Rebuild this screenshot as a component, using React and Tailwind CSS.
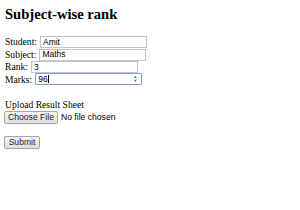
import { useState } from 'react';

const serif = { fontFamily: '"Liberation Serif", "Times New Roman", serif' };

const Field = ({ label, value, focused, number }) => (
  <div className="flex items-center h-[12.4px] text-[9.6px] leading-none text-black">
    <span>{label}</span>
    <div
      className={`ml-[3px] flex items-center h-[12px] w-[107px] bg-white px-[2px] font-['Liberation_Sans',Arial,sans-serif] text-[8.5px] ${
        focused ? 'border border-[#7b9fd6] rounded-[1px]' : 'border border-[#c4c4c4]'
      }`}
    >
      <span className="flex-1 flex items-center">
        {value}
        {focused && <span className="inline-block w-[1px] h-[8px] bg-black" />}
      </span>
      {number && (
        <span className="flex flex-col items-center text-[4px] leading-[4px] text-[#555] mr-[2px]">
          <span>▲</span>
          <span>▼</span>
        </span>
      )}
    </div>
  </div>
);

const GrayButton = ({ children, className = '' }) => (
  <button
    className={`flex items-center justify-center whitespace-nowrap h-[13px] px-0 rounded-[2px] border border-[#a6a6a6] bg-gradient-to-b from-[#f6f6f6] to-[#dedede] text-[8.6px] leading-none text-[#222] font-['Liberation_Sans',Arial,sans-serif] ${className}`}
  >
    {children}
  </button>
);

export default function App() {
  const [file] = useState(null);

  return (
    <div className="w-[300px] h-[210px] bg-white px-[5px] overflow-hidden" style={serif}>
      <h2 className="pt-[5px] text-[14.6px] font-bold leading-[18px] text-black">Subject-wise rank</h2>

      <form className="mt-[13px]">
        <Field label="Student:" value="Amit" />
        <Field label="Subject:" value="Maths" />
        <Field label="Rank:" value="3" />
        <Field label="Marks:" value="96" focused number />

        <div className="mt-[13px] text-[9.6px] leading-[11px] text-black">Upload Result Sheet</div>
        <div className="flex items-center -ml-[1px] mt-[1px]">
          <GrayButton className="w-[54px]">Choose File</GrayButton>
          <span className="ml-[3px] text-[8.6px] font-['Liberation_Sans',Arial,sans-serif] text-black">
            {file ? file.name : 'No file chosen'}
          </span>
        </div>

        <div className="mt-[12px] -ml-[1px]">
          <GrayButton className="w-[36px] h-[12px]">Submit</GrayButton>
        </div>
      </form>
    </div>
  );
}
